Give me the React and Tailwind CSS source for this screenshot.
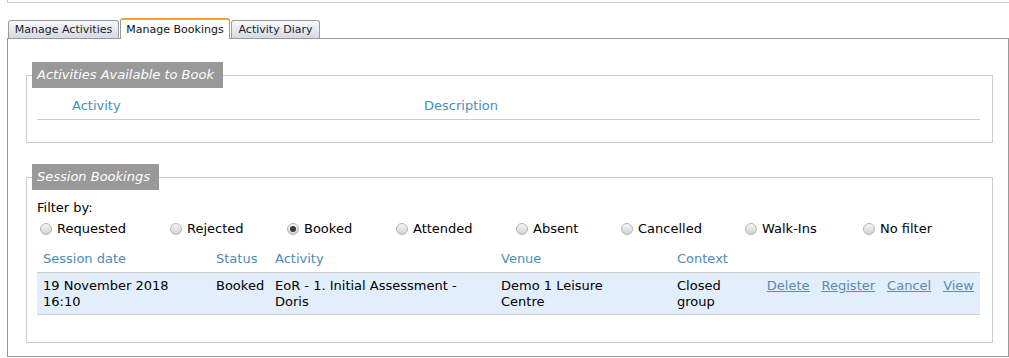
import React from "react";

const filters = [
  { label: "Requested", w: "w-[130px]" },
  { label: "Rejected", w: "w-[117px]" },
  { label: "Booked", w: "w-[109px]", checked: true },
  { label: "Attended", w: "w-[120px]" },
  { label: "Absent", w: "w-[105px]" },
  { label: "Cancelled", w: "w-[124px]" },
  { label: "Walk-Ins", w: "w-[118px]" },
  { label: "No filter", w: "w-[100px]" },
];

const Radio = ({ checked }) => (
  <span className="w-[12px] h-[12px] rounded-full border border-[#b4b4b4] bg-gradient-to-b from-[#f6f6f6] to-[#d2d2d2] flex items-center justify-center shrink-0">
    {checked && <span className="w-[6px] h-[6px] rounded-full bg-[#3a3a3a]" />}
  </span>
);

const Legend = ({ children }) => (
  <legend className="ml-[5px] h-[26px] leading-[26px] pl-[5px] pr-[9px] bg-[#999999] text-white italic text-[13px]">
    {children}
  </legend>
);

const Tab = ({ children, active, w, className = "" }) => (
  <div
    className={`${w} ${className} text-[11px] text-center rounded-t-[3px] border border-[#9a9a9a] ${
      active
        ? "h-[21px] leading-[19px] bg-white border-t-2 border-t-[#f0a23a] border-b-0 relative z-10 mb-[-1px] text-[#111]"
        : "h-[18px] leading-[17px] bg-gradient-to-b from-[#f8f9fc] to-[#d3d9e6] border-b-0 text-[#222]"
    }`}
  >
    {children}
  </div>
);

export default function App() {
  return (
    <div className="w-[1009px] h-[358px] bg-white text-black text-[13px] leading-[16px]" style={{ fontFamily: '"DejaVu Sans", Verdana, sans-serif' }}>
      <div className="ml-[7px] h-[3px] border-l border-b border-[#cccccc]" />

      <div className="flex items-end ml-[8px] mt-[14px] h-[21px]">
        <Tab w="w-[111px]">Manage Activities</Tab>
        <Tab w="w-[110px]" active className="ml-[1px]">Manage Bookings</Tab>
        <Tab w="w-[89px]" className="ml-[1px]">Activity Diary</Tab>
      </div>

      <div className="ml-[7px] w-[1002px] h-[319px] border border-[#999999] pt-[23px]">
        <fieldset className="ml-[18px] w-[967px] border border-[#cccccc] pb-[22px]">
          <Legend>Activities Available to Book</Legend>
          <div className="ml-[10px] mr-[12px] mt-[6px] flex border-b border-[#cccccc] pt-[4px] pb-[5px] text-[#4a8db5]">
            <div className="w-[387px] pl-[35px]">Activity</div>
            <div>Description</div>
          </div>
        </fieldset>

        <fieldset className="ml-[18px] mt-[21px] w-[967px] border border-[#cccccc] pb-[27px]">
          <Legend>Session Bookings</Legend>
          <div className="pl-[10px] pr-[12px] mt-[10px]">
            <div>Filter by:</div>
            <div className="flex mt-[5px] ml-[3px]">
              {filters.map((f) => (
                <div key={f.label} className={`${f.w} flex items-center gap-[5px]`}>
                  <Radio checked={f.checked} />
                  <span>{f.label}</span>
                </div>
              ))}
            </div>

            <div className="flex mt-[10px] pt-[4px] pb-[5px] border-b border-[#cccccc] text-[#4a8db5]">
              <div className="w-[173px] pl-[6px]">Session date</div>
              <div className="w-[59px] pl-[6px]">Status</div>
              <div className="w-[226px] pl-[6px]">Activity</div>
              <div className="w-[176px] pl-[6px]">Venue</div>
              <div className="w-[90px] pl-[6px]">Context</div>
            </div>
            <div className="flex bg-[#e2eefb] border-b border-[#cccccc] pt-[5px] pb-[4px]">
              <div className="w-[173px] pl-[6px]">19 November 2018<br />16:10</div>
              <div className="w-[59px] pl-[6px]">Booked</div>
              <div className="w-[226px] pl-[6px]">EoR - 1. Initial Assessment -<br />Doris</div>
              <div className="w-[176px] pl-[6px]">Demo 1 Leisure<br />Centre</div>
              <div className="w-[90px] pl-[6px]">Closed<br />group</div>
              <div className="flex-1 flex justify-end gap-[12px] pr-[6px] text-[#5a8bb0] underline">
                <a href="#">Delete</a>
                <a href="#">Register</a>
                <a href="#">Cancel</a>
                <a href="#">View</a>
              </div>
            </div>
          </div>
        </fieldset>
      </div>
    </div>
  );
}
